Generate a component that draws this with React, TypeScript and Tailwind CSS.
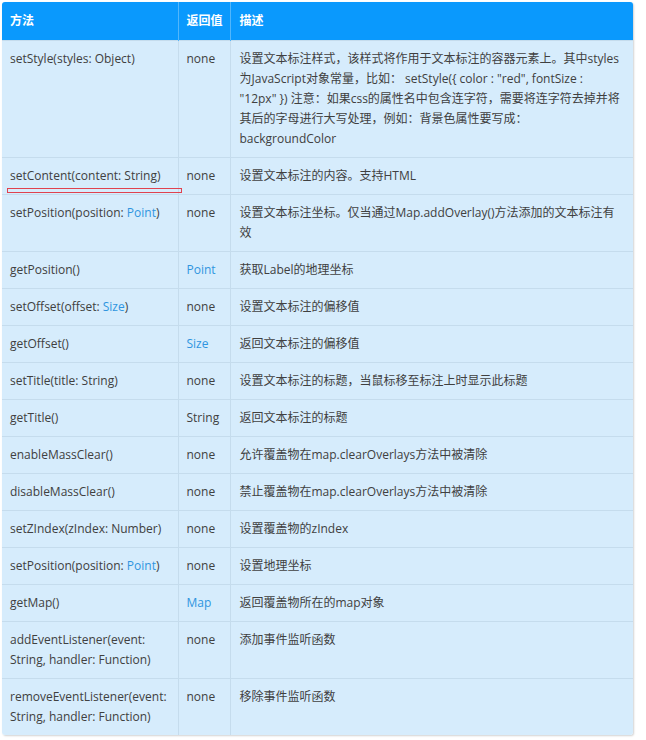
type Cell = string | { text: string; link?: boolean }[];

interface Row {
  method: Cell;
  ret: Cell;
  desc: string[];
}

const rows: Row[] = [
  {
    method: "setStyle(styles: Object)",
    ret: "none",
    desc: [
      "设置文本标注样式，该样式将作用于文本标注的容器元素上。其中styles",
      "为JavaScript对象常量，比如： setStyle({ color : \"red\", fontSize :",
      "\"12px\" }) 注意：如果css的属性名中包含连字符，需要将连字符去掉并将",
      "其后的字母进行大写处理，例如：背景色属性要写成：",
      "backgroundColor",
    ],
  },
  { method: "setContent(content: String)", ret: "none", desc: ["设置文本标注的内容。支持HTML"] },
  {
    method: [{ text: "setPosition(position: " }, { text: "Point", link: true }, { text: ")" }],
    ret: "none",
    desc: ["设置文本标注坐标。仅当通过Map.addOverlay()方法添加的文本标注有", "效"],
  },
  { method: "getPosition()", ret: [{ text: "Point", link: true }], desc: ["获取Label的地理坐标"] },
  {
    method: [{ text: "setOffset(offset: " }, { text: "Size", link: true }, { text: ")" }],
    ret: "none",
    desc: ["设置文本标注的偏移值"],
  },
  { method: "getOffset()", ret: [{ text: "Size", link: true }], desc: ["返回文本标注的偏移值"] },
  { method: "setTitle(title: String)", ret: "none", desc: ["设置文本标注的标题，当鼠标移至标注上时显示此标题"] },
  { method: "getTitle()", ret: "String", desc: ["返回文本标注的标题"] },
  { method: "enableMassClear()", ret: "none", desc: ["允许覆盖物在map.clearOverlays方法中被清除"] },
  { method: "disableMassClear()", ret: "none", desc: ["禁止覆盖物在map.clearOverlays方法中被清除"] },
  { method: "setZIndex(zIndex: Number)", ret: "none", desc: ["设置覆盖物的zIndex"] },
  {
    method: [{ text: "setPosition(position: " }, { text: "Point", link: true }, { text: ")" }],
    ret: "none",
    desc: ["设置地理坐标"],
  },
  { method: "getMap()", ret: [{ text: "Map", link: true }], desc: ["返回覆盖物所在的map对象"] },
  { method: "addEventListener(event: String, handler: Function)", ret: "none", desc: ["添加事件监听函数"] },
  { method: "removeEventListener(event: String, handler: Function)", ret: "none", desc: ["移除事件监听函数"] },
];

function Text({ cell }: { cell: Cell }) {
  if (typeof cell === "string") return <>{cell}</>;
  return (
    <>
      {cell.map((p, i) =>
        p.link ? (
          <span key={i} className="text-[#2f95df]">
            {p.text}
          </span>
        ) : (
          <span key={i}>{p.text}</span>
        )
      )}
    </>
  );
}

export default function App() {
  return (
    <div className="min-h-[740px] bg-white p-[2px] font-['Open_Sans','Noto_Sans_CJK_SC',sans-serif] text-[12px] leading-[20px] text-[#404040]">
      <div className="relative w-[631px] overflow-hidden rounded-[3px] shadow-[1px_1px_2px_rgba(0,0,0,0.18)]">
        <table className="w-full table-fixed border-collapse bg-[#d6ecfc]">
          <colgroup>
            <col className="w-[176px]" />
            <col className="w-[52px]" />
            <col />
          </colgroup>
          <thead>
            <tr className="h-[38px] bg-[#0a99fd] text-left text-white">
              <th className="border-r border-[#52b6fb] px-2 font-bold">方法</th>
              <th className="whitespace-nowrap border-r border-[#52b6fb] px-2 font-bold">返回值</th>
              <th className="px-[9px] font-bold">描述</th>
            </tr>
          </thead>
          <tbody>
            {rows.map((r, i) => (
              <tr key={i} className="border-t border-[#c5dced] align-top">
                <td className="border-r border-[#c5dced] px-2 py-2">
                  <Text cell={r.method} />
                </td>
                <td className="border-r border-[#c5dced] px-2 py-2">
                  <Text cell={r.ret} />
                </td>
                <td className="whitespace-nowrap py-2 pl-[9px] pr-1">
                  {r.desc.map((line, j) => (
                    <div key={j}>{line}</div>
                  ))}
                </td>
              </tr>
            ))}
          </tbody>
        </table>
        <div className="absolute left-[5px] top-[186px] h-[5px] w-[175px] border border-[#e0424f]" />
      </div>
    </div>
  );
}
